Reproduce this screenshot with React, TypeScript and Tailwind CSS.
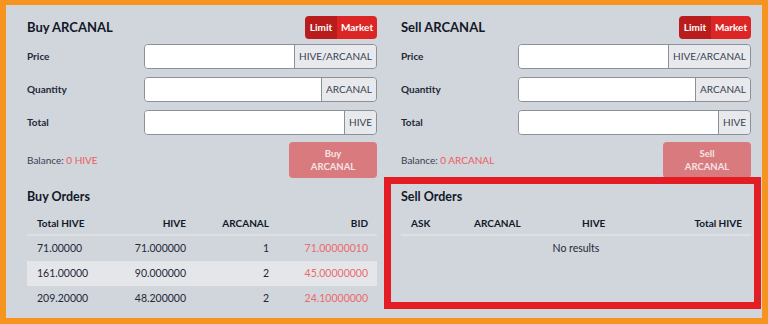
import React from 'react';

type Side = {
    title: string;
    balance: string;
    action: string;
};

const font = { fontFamily: 'Lato, "Noto Sans", sans-serif' };

function LimitMarket() {
    return (
        <div className="flex h-[23px] rounded-[4px] overflow-hidden text-[10px] font-bold text-white">
            <div className="flex items-center justify-center w-[32px] bg-[#b91c1c]">Limit</div>
            <div className="flex items-center justify-center w-[40px] bg-[#dc2626]">Market</div>
        </div>
    );
}

function Field({ label, unit }: { label: string; unit: string }) {
    return (
        <div className="flex items-center h-[25px]">
            <div className="w-[117px] text-[10px] font-bold text-[#1f2937]">{label}</div>
            <div className="flex flex-1 h-full rounded-[4px] border border-[#8b9099] overflow-hidden">
                <div className="flex-1 bg-white" />
                <div className="flex items-center px-[4px] bg-[#e8e9ed] border-l border-[#8b9099] text-[10px] text-[#374151]">
                    {unit}
                </div>
            </div>
        </div>
    );
}

function OrderForm({ side }: { side: Side }) {
    return (
        <div className="flex flex-col">
            <div className="flex items-center justify-between mt-[11px] h-[23px]">
                <h2 className="text-[13px] font-bold text-[#111827]">{side.title}</h2>
                <LimitMarket />
            </div>
            <div className="flex flex-col gap-[8px] mt-[5px]">
                <Field label="Price" unit="HIVE/ARCANAL" />
                <Field label="Quantity" unit="ARCANAL" />
                <Field label="Total" unit="HIVE" />
            </div>
            <div className="flex items-center justify-between mt-[7px]">
                <div className="text-[10px] text-[#374151]">
                    Balance: <span className="text-[#ef5b5b]">{side.balance}</span>
                </div>
                <button className="w-[88px] h-[36px] rounded-[4px] bg-[#d97a7e] text-[9.5px] font-bold text-[#f5e4e4] leading-[13px]">
                    {side.action}
                    <br />
                    ARCANAL
                </button>
            </div>
        </div>
    );
}

const buyRows = [
    { total: '71.00000', hive: '71.000000', qty: '1', bid: '71.00000010' },
    { total: '161.00000', hive: '90.000000', qty: '2', bid: '45.00000000' },
    { total: '209.20000', hive: '48.200000', qty: '2', bid: '24.10000000' }
];

function BuyOrders() {
    const cols = 'grid grid-cols-[80px_89px_83px_98px]';
    return (
        <div className="flex flex-col pt-[10px]">
            <h3 className="h-[20px] leading-[20px] text-[12.5px] font-bold text-[#111827]">Buy Orders</h3>
            <div className={`${cols} h-[24px] mt-[5px] items-center border-b-2 border-[#dcdfe4] text-[10px] font-bold text-[#111827]`}>
                <div className="pl-[10px]">Total HIVE</div>
                <div className="text-right pr-[10px]">HIVE</div>
                <div className="text-right pr-[10px]">ARCANAL</div>
                <div className="text-right pr-[9px]">BID</div>
            </div>
            {buyRows.map((r, i) => (
                <div
                    key={r.total}
                    className={`${cols} h-[25px] items-center text-[10.5px] text-[#1f2937] ${i === 1 ? 'bg-[#e5e6ea]' : ''}`}
                >
                    <div className="pl-[10px]">{r.total}</div>
                    <div className="text-right pr-[10px]">{r.hive}</div>
                    <div className="text-right pr-[10px]">{r.qty}</div>
                    <div className="text-right pr-[9px] text-[#ea6b6b]">{r.bid}</div>
                </div>
            ))}
        </div>
    );
}

function SellOrders() {
    const cols = 'grid grid-cols-[63px_108px_1fr_auto]';
    return (
        <div className="flex flex-col h-[132px] mr-[1px] border-[7px] border-[#e41c23] pl-[10px] pr-[3px] pt-[3px]">
            <h3 className="h-[20px] leading-[20px] text-[12.5px] font-bold text-[#111827]">Sell Orders</h3>
            <div className={`${cols} h-[24px] mt-[5px] items-center border-b-2 border-[#dcdfe4] text-[10px] font-bold text-[#111827]`}>
                <div className="pl-[10px]">ASK</div>
                <div className="pl-[10px]">ARCANAL</div>
                <div className="pl-[10px]">HIVE</div>
                <div className="text-right pr-[9px]">Total HIVE</div>
            </div>
            <div className="h-[25px] flex items-center justify-center text-[10.5px] text-[#1f2937]">No results</div>
        </div>
    );
}

export default function App() {
    return (
        <div style={font} className="w-[768px] h-[324px] bg-[#f5951f] pt-[5px] pl-[6px] pr-[6px] pb-[6px]">
            <div className="h-[313px] bg-[#d1d5dc] grid grid-cols-2 grid-rows-[172px_1fr]">
                <div className="pl-[21px] pr-[7px]">
                    <OrderForm side={{ title: 'Buy ARCANAL', balance: '0 HIVE', action: 'Buy' }} />
                </div>
                <div className="pl-[17px] pr-[11px]">
                    <OrderForm side={{ title: 'Sell ARCANAL', balance: '0 ARCANAL', action: 'Sell' }} />
                </div>
                <div className="pl-[21px] pr-[7px]">
                    <BuyOrders />
                </div>
                <div>
                    <SellOrders />
                </div>
            </div>
        </div>
    );
}
